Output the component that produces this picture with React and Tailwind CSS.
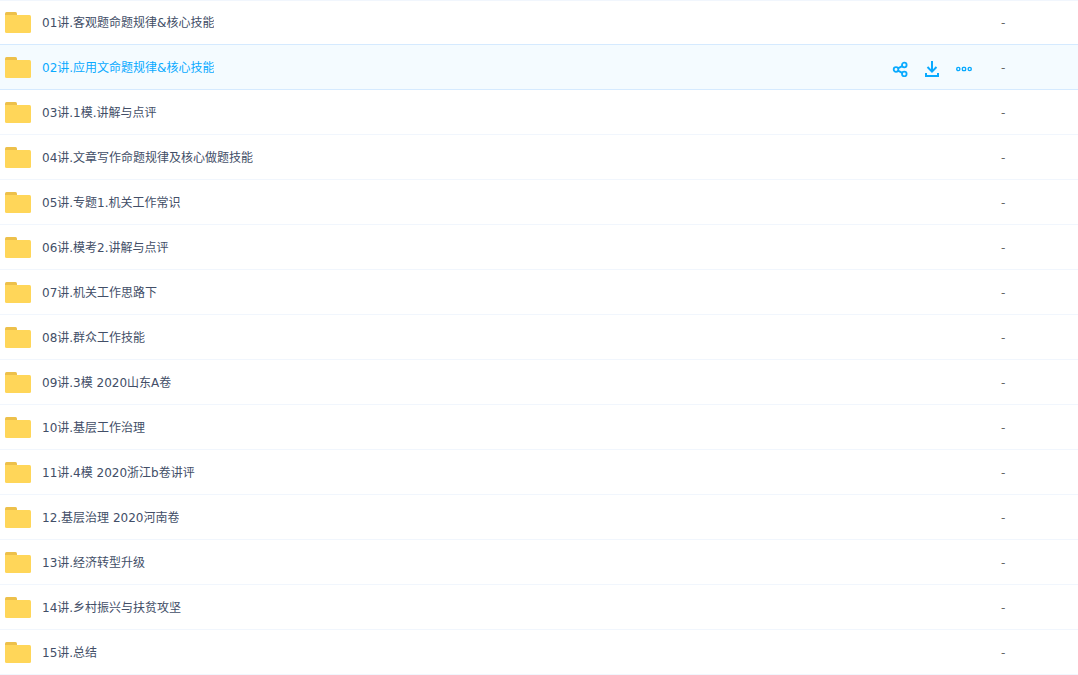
import React, { useState } from "react";

const folders = [
  "01讲.客观题命题规律&核心技能",
  "02讲.应用文命题规律&核心技能",
  "03讲.1模.讲解与点评",
  "04讲.文章写作命题规律及核心做题技能",
  "05讲.专题1.机关工作常识",
  "06讲.模考2.讲解与点评",
  "07讲.机关工作思路下",
  "08讲.群众工作技能",
  "09讲.3模 2020山东A卷",
  "10讲.基层工作治理",
  "11讲.4模 2020浙江b卷讲评",
  "12.基层治理 2020河南卷",
  "13讲.经济转型升级",
  "14讲.乡村振兴与扶贫攻坚",
  "15讲.总结",
];

const FolderIcon = () => (
  <svg width="26" height="21" viewBox="0 0 26 21" className="shrink-0" aria-hidden="true">
    <path d="M0 1.5Q0 0 1.5 0H10.5Q12 0 12 1.5V6H0Z" fill="#edc04a" />
    <path d="M0 3H24.5Q26 3 26 4.5V19.5Q26 21 24.5 21H1.5Q0 21 0 19.5Z" fill="#ffd659" />
  </svg>
);

const ShareIcon = () => (
  <svg width="16" height="16" viewBox="0 0 16 16" fill="none" stroke="currentColor" strokeWidth="1.8" aria-hidden="true">
    <circle cx="4" cy="8.5" r="2.3" />
    <circle cx="12.3" cy="4" r="2.3" />
    <circle cx="12.3" cy="13" r="2.3" />
    <path d="M6 7.4L10.2 5.1M6 9.6L10.2 11.9" />
  </svg>
);

const DownloadIcon = () => (
  <svg width="16" height="16" viewBox="0 0 16 16" fill="none" stroke="currentColor" strokeWidth="2" aria-hidden="true">
    <path d="M8 0V11" />
    <path d="M3.5 6L8 10.6L12.5 6" />
    <path d="M2 12V15H14V12" />
  </svg>
);

const MoreIcon = () => (
  <svg width="16" height="16" viewBox="0 0 16 16" fill="none" stroke="currentColor" strokeWidth="1.4" aria-hidden="true">
    <circle cx="2.3" cy="8" r="1.6" />
    <rect x="6.4" y="6.4" width="3.2" height="3.2" rx="0.8" />
    <circle cx="13.7" cy="8" r="1.6" />
  </svg>
);

const actions = [
  { label: "分享", Icon: ShareIcon },
  { label: "下载", Icon: DownloadIcon },
  { label: "更多", Icon: MoreIcon },
];

const App = () => {
  const [active, setActive] = useState(1);

  // The active row is outlined, so the row above shares its border color
  const borderColor = (index) =>
    index === active || index === active - 1
      ? "border-b-[#d5eaff]"
      : "border-b-[#f1f6fd]";

  return (
    <main className="bg-white font-['DejaVu_Sans','Noto_Sans_CJK_SC',sans-serif] text-xs text-[#424e67]">
      <table className="w-full border-separate border-spacing-0 table-fixed">
        <colgroup>
          <col />
          <col className="w-[77px]" />
        </colgroup>
        <tbody>
          {folders.map((name, index) => (
            <tr
              key={name}
              onClick={() => setActive(index)}
              className={`group ${index === active ? "bg-[#f4fbff]" : "bg-white"}`}
            >
              <td
                className={`h-[45px] border-b p-0 group-first:border-t group-first:border-t-[#f1f6fd] ${borderColor(index)}`}
              >
                <div className="flex items-center pl-[5px] pr-[27px]">
                  <FolderIcon />
                  <a
                    href="#"
                    className={`ml-[11px] truncate pt-px leading-5 ${index === active ? "text-[#09aaff]" : ""}`}
                  >
                    {name}
                  </a>
                  {index === active && (
                    <div className="ml-auto flex gap-3 pt-1 text-[#09aaff]">
                      {actions.map(({ label, Icon }) => (
                        <button
                          key={label}
                          type="button"
                          aria-label={label}
                          className="flex w-5 justify-center"
                        >
                          <Icon />
                        </button>
                      ))}
                    </div>
                  )}
                </div>
              </td>
              <td
                className={`h-[45px] border-b p-0 pt-px text-[#666] group-first:border-t group-first:border-t-[#f1f6fd] ${borderColor(index)}`}
              >
                -
              </td>
            </tr>
          ))}
        </tbody>
      </table>
    </main>
  );
};

export default App;
